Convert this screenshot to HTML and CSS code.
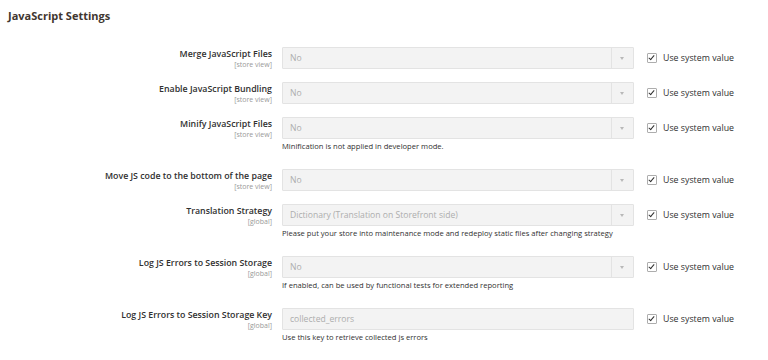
FILE: index.html
```html
<!DOCTYPE html>
<html lang="en">
<head>
    <meta charset="UTF-8">
    <title>JavaScript Settings</title>
    <link rel="stylesheet" href="styles.css">
</head>
<body>
    <div class="section">
        <h2 class="section-title">JavaScript Settings</h2>
        <div class="fields">
            <div class="row">
                <div class="label">Merge JavaScript Files<span class="scope">[store view]</span></div>
                <div class="value">
                    <div class="select">No</div>
                </div>
                <label class="use-default"><span class="checkbox"></span>Use system value</label>
            </div>
            <div class="row">
                <div class="label">Enable JavaScript Bundling<span class="scope">[store view]</span></div>
                <div class="value">
                    <div class="select">No</div>
                </div>
                <label class="use-default"><span class="checkbox"></span>Use system value</label>
            </div>
            <div class="row">
                <div class="label">Minify JavaScript Files<span class="scope">[store view]</span></div>
                <div class="value">
                    <div class="select">No</div>
                    <p class="note">Minification is not applied in developer mode.</p>
                </div>
                <label class="use-default"><span class="checkbox"></span>Use system value</label>
            </div>
            <div class="row">
                <div class="label">Move JS code to the bottom of the page<span class="scope">[store view]</span></div>
                <div class="value">
                    <div class="select">No</div>
                </div>
                <label class="use-default"><span class="checkbox"></span>Use system value</label>
            </div>
            <div class="row">
                <div class="label">Translation Strategy<span class="scope">[global]</span></div>
                <div class="value">
                    <div class="select">Dictionary (Translation on Storefront side)</div>
                    <p class="note">Please put your store into maintenance mode and redeploy static files after changing strategy</p>
                </div>
                <label class="use-default"><span class="checkbox"></span>Use system value</label>
            </div>
            <div class="row">
                <div class="label">Log JS Errors to Session Storage<span class="scope">[global]</span></div>
                <div class="value">
                    <div class="select">No</div>
                    <p class="note">If enabled, can be used by functional tests for extended reporting</p>
                </div>
                <label class="use-default"><span class="checkbox"></span>Use system value</label>
            </div>
            <div class="row">
                <div class="label">Log JS Errors to Session Storage Key<span class="scope">[global]</span></div>
                <div class="value">
                    <div class="input">collected_errors</div>
                    <p class="note">Use this key to retrieve collected js errors</p>
                </div>
                <label class="use-default"><span class="checkbox"></span>Use system value</label>
            </div>
        </div>
    </div>
</body>
</html>
```

FILE: styles.css
```css
body {
    margin: 0;
    background-color: #fff;
    font-family: "Open Sans", "Liberation Sans", sans-serif;
    color: #303030;
}
.section {
    padding: 7px 8px 0 8px;
}
.section-title {
    margin: 0 0 22px 0;
    font-size: 11px;
    font-weight: 700;
    line-height: 18px;
    color: #41362f;
}
.row {
    display: flex;
    align-items: flex-start;
    margin-bottom: 13px;
}
.label {
    width: 264px;
    text-align: right;
    font-size: 8.8px;
    font-weight: 600;
    line-height: 12px;
    padding-top: 1px;
}
.scope {
    display: block;
    font-size: 7px;
    font-weight: 400;
    line-height: 9px;
    color: #999;
}
.value {
    width: 352px;
    margin-left: 10px;
}
.select, .input {
    position: relative;
    box-sizing: border-box;
    height: 22px;
    padding: 0 7px;
    background-color: #f3f3f3;
    border: 1px solid #e3e3e3;
    border-radius: 1px;
    font-size: 8.6px;
    line-height: 20px;
    color: #adadad;
}
.select::before {
    /* divider before the arrow */
    content: "";
    position: absolute;
    top: 0;
    bottom: 0;
    right: 21px;
    border-left: 1px solid #e3e3e3;
}
.select::after {
    content: "";
    position: absolute;
    top: 9px;
    right: 9px;
    border-left: 2px solid transparent;
    border-right: 2px solid transparent;
    border-top: 3px solid #b8b8b8;
}
.note {
    margin: 1px 0 4px 0;
    font-size: 7.6px;
    line-height: 12px;
    color: #303030;
}
.use-default {
    display: flex;
    align-items: center;
    margin-left: 13px;
    height: 22px;
    font-size: 8.8px;
    color: #303030;
}
.checkbox {
    position: relative;
    box-sizing: border-box;
    width: 10px;
    height: 10px;
    margin-right: 6px;
    border: 1px solid #adadad;
    border-radius: 1px;
    background-color: #fff;
}
.checkbox::after {
    /* check mark */
    content: "";
    position: absolute;
    left: 2px;
    top: 0px;
    width: 2px;
    height: 5px;
    border-right: 1.5px solid #303030;
    border-bottom: 1.5px solid #303030;
    transform: rotate(40deg);
}
```
